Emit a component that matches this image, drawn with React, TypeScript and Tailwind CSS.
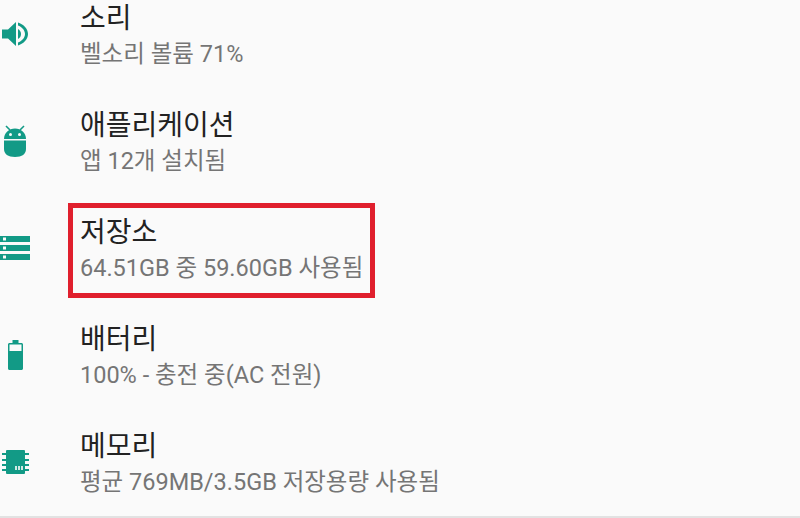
import React from 'react';

const ICON = '#129a86';

const SoundIcon = () => (
  <svg width="28" height="26" viewBox="0 0 28 26" fill={ICON}>
    <path d="M1 8.500h6L15 1v24l-8-7.500H1z" />
    <path d="M17 8c2 1 3 3 3 5s-1 4-3 5z" />
    <path d="M17 1.500c5 1.500 10 6 10 11.500s-5 10-10 11.500v-3c3.500-1.200 7-4.500 7-8.500s-3.500-7.300-7-8.500z" />
  </svg>
);

const AndroidIcon = () => (
  <svg width="22" height="32" viewBox="0 0 22 32" fill={ICON}>
    <path d="M2 1l4 4M20 1l-4 4" stroke={ICON} strokeWidth="1.600" />
    <path d="M0 14C0 8 5 3.500 11 3.500S22 8 22 14z" />
    <circle cx="6.500" cy="9.500" r="1.500" fill="#fafafa" />
    <circle cx="15.500" cy="9.500" r="1.500" fill="#fafafa" />
    <path d="M0 15.500h22V24c0 5-4 8-11 8S0 29 0 24z" />
  </svg>
);

const StorageIcon = () => (
  <svg width="30" height="24" viewBox="0 0 30 24" fill={ICON}>
    <path d="M0 0h30v6H0zM0 9h30v6H0zM0 18h30v6H0z" />
    <path d="M3 1.500h3v3H3zM3 10.500h3v3H3zM3 19.500h3v3H3z" fill="#fafafa" />
  </svg>
);

const BatteryIcon = () => (
  <svg width="15" height="30" viewBox="0 0 15 30" fill={ICON}>
    <path d="M4.500 0h6v3h3c.800 0 1.500.700 1.500 1.500V28.500c0 .800-.700 1.500-1.500 1.500h-12C.700 30 0 29.300 0 28.500V4.500C0 3.700.700 3 1.500 3h3z" />
    <path d="M1.500 4.500h12V11h-12z" fill="#fafafa" />
  </svg>
);

const MemoryIcon = () => (
  <svg width="27" height="24" viewBox="0 0 27 24" fill={ICON}>
    <rect x="4" y="0" width="19" height="24" rx="1" />
    <path d="M0 3h27v2H0zM0 9h27v2H0zM0 14h27v2H0zM0 19h27v2H0z" />
    <path d="M13 16h2v4h-2zM16 16h2v4h-2zM19 16h2v4h-2z" fill="#cfe9e4" />
  </svg>
);

const rows = [
  { title: '소리', sub: '벨소리 볼륨 71%', icon: <SoundIcon /> },
  { title: '애플리케이션', sub: '앱 12개 설치됨', icon: <AndroidIcon /> },
  { title: '저장소', sub: '64.51GB 중 59.60GB 사용됨', icon: <StorageIcon />, marked: true },
  { title: '배터리', sub: '100% - 충전 중(AC 전원)', icon: <BatteryIcon /> },
  { title: '메모리', sub: '평균 769MB/3.5GB 저장용량 사용됨', icon: <MemoryIcon /> },
];

export default function App() {
  return (
    <div className="h-[518px] w-[800px] overflow-hidden bg-[#fafafa] font-['Roboto','Noto_Sans_CJK_KR',sans-serif]">
      <div className="-mt-[17px] h-[535px] border-b-2 border-[#e2e2e2]">
        {rows.map((row) => (
          <div key={row.title} className="relative flex h-[107px] items-center">
            <div className="mr-[50px] flex w-[30px] shrink-0 justify-center pb-[5px]">{row.icon}</div>
            <div>
              <div className="text-[28px] leading-[36px] text-[#222222]">{row.title}</div>
              <div className="-mt-[1px] text-[23.5px] leading-[36px] text-[#757575]">{row.sub}</div>
            </div>
            {row.marked && (
              <div className="absolute left-[68px] top-[6px] h-[95px] w-[307px] border-[5px] border-[#e01f2d]" />
            )}
          </div>
        ))}
      </div>
    </div>
  );
}
